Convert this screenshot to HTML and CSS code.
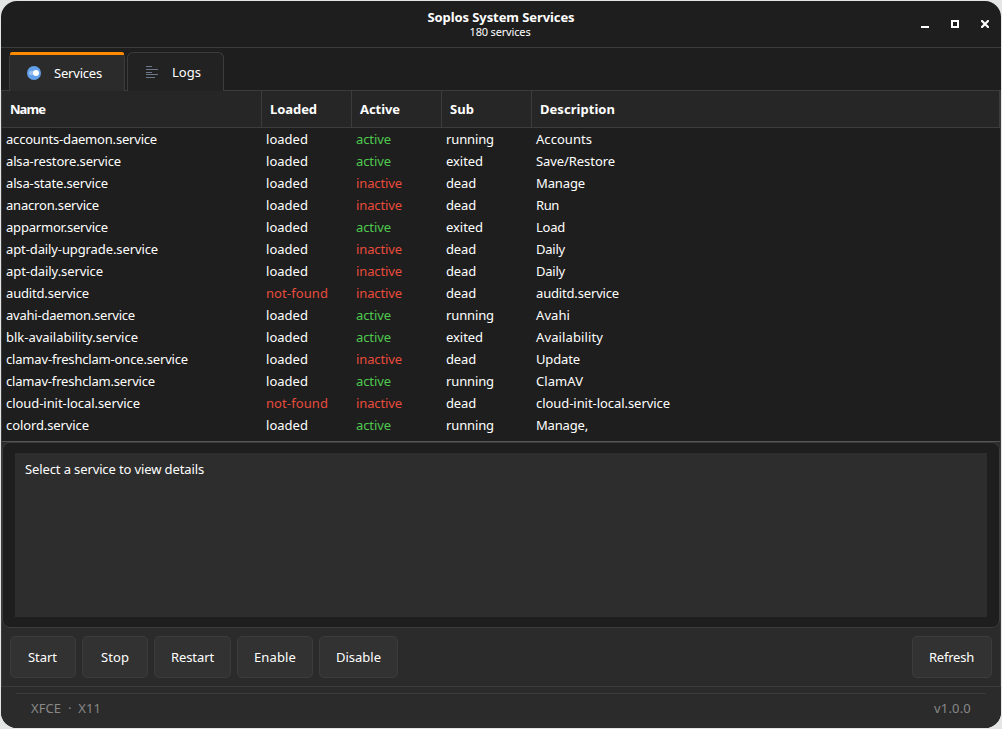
FILE: index.html
```html
<!DOCTYPE html>
<html lang="en">
<head>
    <meta charset="UTF-8">
    <meta name="viewport" content="width=device-width, initial-scale=1.0">
    <title>Soplos System Services</title>
    <link rel="stylesheet" href="styles.css">
</head>
<body>

    <div class="window">
        <header class="titlebar">
            <div class="titles">
                <h1><span class="fit" data-width="147">Soplos System Services</span></h1>
                <p><span class="fit" data-width="61">180 services</span></p>
            </div>
            <div class="controls">
                <svg width="8" height="8"><path d="M0 6h8v2H0z" fill="#fff"/></svg>
                <svg width="8" height="8"><path d="M1 1h6v6H1z" fill="none" stroke="#fff" stroke-width="2"/></svg>
                <svg width="8" height="8"><path d="M1 1l6 6M7 1L1 7" stroke="#fff" stroke-width="2.2" stroke-linecap="square"/></svg>
            </div>
        </header>

        <nav class="tabs">
            <div class="tab tab-active">
                <svg width="14" height="14"><circle cx="7" cy="7" r="7" fill="#62a0ea"/><rect x="2" y="5" width="9" height="4" rx="2" fill="#99c1f1"/><circle cx="9" cy="7" r="3" fill="#fff"/></svg>
                <span class="fit" data-width="48">Services</span>
            </div>
            <div class="tab">
                <svg width="14" height="14"><path d="M1 1.5h6M1 4.5h12M1 7.5h6M1 9.5h12M1 12.5h9" stroke="#6b7889"/></svg>
                <span class="fit" data-width="29">Logs</span>
            </div>
        </nav>

        <main class="page">
            <div class="list">
                <div class="row head">
                    <span>Name</span><span>Loaded</span><span>Active</span><span>Sub</span><span>Description</span>
                </div>
                <div id="rows"></div>
            </div>

            <div class="details">
                <div class="details-text"><span class="fit" data-width="179">Select a service to view details</span></div>
            </div>

            <div class="actions">
                <button class="w66 start"><span class="fit" data-width="29">Start</span></button>
                <button class="w66"><span class="fit" data-width="28">Stop</span></button>
                <button class="w77"><span class="fit" data-width="43">Restart</span></button>
                <button class="w76"><span class="fit" data-width="42">Enable</span></button>
                <button class="w79"><span class="fit" data-width="45">Disable</span></button>
                <button class="w80 refresh"><span class="fit" data-width="45">Refresh</span></button>
            </div>
        </main>

        <footer class="statusbar">
            <div class="status">
                <span class="fit" data-width="70">XFCE &nbsp;·&nbsp; X11</span>
                <span class="fit" data-width="37">v1.0.0</span>
            </div>
        </footer>
    </div>

    <script src="script.js"></script>
</body>
</html>
```
FILE: script.js
```js
// name, name width, loaded, active, sub, description, description width
const services = [
    ["accounts-daemon.service", 151, "loaded", "active", "running", "Accounts", 56],
    ["alsa-restore.service", 115, "loaded", "active", "exited", "Save/Restore", 79],
    ["alsa-state.service", 102, "loaded", "inactive", "dead", "Manage", 49],
    ["anacron.service", 93, "loaded", "inactive", "dead", "Run", 23],
    ["apparmor.service", 102, "loaded", "active", "exited", "Load", 29],
    ["apt-daily-upgrade.service", 152, "loaded", "inactive", "dead", "Daily", 29],
    ["apt-daily.service", 97, "loaded", "inactive", "dead", "Daily", 29],
    ["auditd.service", 83, "not-found", "inactive", "dead", "auditd.service", 83],
    ["avahi-daemon.service", 129, "loaded", "active", "running", "Avahi", 34],
    ["blk-availability.service", 132, "loaded", "active", "exited", "Availability", 67],
    ["clamav-freshclam-once.service", 182, "loaded", "inactive", "dead", "Update", 44],
    ["clamav-freshclam.service", 149, "loaded", "active", "running", "ClamAV", 47],
    ["cloud-init-local.service", 134, "not-found", "inactive", "dead", "cloud-init-local.service", 134],
    ["colord.service", 83, "loaded", "active", "running", "Manage,", 52]
];

const widths = {
    "loaded": 42, "not-found": 62, "active": 35, "inactive": 46,
    "running": 48, "exited": 37, "dead": 30,
    "Name": 35, "Loaded": 47, "Active": 40, "Sub": 24, "Description": 75
};

function addCell(row, text, width, state) {
    const cell = document.createElement("span");
    const label = document.createElement("span");
    label.className = "fit" + (state ? " " + state : "");
    label.dataset.width = width;
    label.textContent = text;
    cell.appendChild(label);
    row.appendChild(cell);
}

const rows = document.getElementById("rows");
services.forEach(([name, nameWidth, loaded, active, sub, desc, descWidth]) => {
    const row = document.createElement("div");
    row.className = "row";
    addCell(row, name, nameWidth);
    addCell(row, loaded, widths[loaded], loaded === "not-found" ? "bad" : "");
    addCell(row, active, widths[active], active === "active" ? "good" : "bad");
    addCell(row, sub, widths[sub]);
    addCell(row, desc, descWidth);
    rows.appendChild(row);
});

document.querySelectorAll(".head > span").forEach((cell) => {
    const text = cell.textContent;
    cell.innerHTML = '<span class="fit" data-width="' + widths[text] + '">' + text + '</span>';
});

document.querySelectorAll(".fit").forEach((el) => {
    const extra = Number(el.dataset.width) - el.getBoundingClientRect().width;
    const gap = extra / el.textContent.length;
    el.style.letterSpacing = gap.toFixed(3) + "px";
});
```
FILE: styles.css
```css
* { box-sizing: border-box; }
body { margin: 0; padding: 1px; height: 729px; overflow: hidden; background: #e4e6e6; color: #fff; font: 13px/22px "Noto Sans", "Open Sans", sans-serif; }
h1, p { margin: 0; }
svg { display: block; flex: none; }
.fit { white-space: nowrap; }
.window { width: 1000px; height: 727px; display: flex; flex-direction: column; overflow: hidden; background: #1e1e1e; border-radius: 16px; }

.titlebar { height: 47px; flex: none; display: grid; grid-template-columns: 1fr auto 1fr; border-bottom: 1px solid #3c3c3c; }
.titles { grid-column: 2; padding-top: 8px; text-align: center; }
.titles h1 { font-size: 13px; line-height: 17px; }
.titles p { padding-right: 2px; font-size: 11px; line-height: 12px; }
.controls { display: flex; justify-content: flex-end; gap: 22px; padding: 19px 12px 0 0; }

.tabs { height: 43px; flex: none; display: flex; align-items: flex-end; gap: 2px; padding-left: 8px; border-bottom: 1px solid #3c3c3c; }
.tab { width: 97px; height: 39px; margin-bottom: -1px; padding-left: 17px; display: flex; align-items: center; gap: 13px; background: #222; border: 1px solid #3c3c3c; border-bottom: 0; border-radius: 6px 6px 0 0; }
.tab-active { width: 116px; padding-top: 1px; background: #2b2b2b; position: relative; }
.tab-active::before { content: ""; position: absolute; top: -1px; left: 0; right: 0; height: 3px; background: #ff8c00; border-radius: 2px 2px 0 0; }

.page { height: 596px; flex: none; display: flex; flex-direction: column; background: #2b2b2b; border: 1px solid #3c3c3c; border-top: 0; }
.list { height: 351px; flex: none; background: #1e1e1e; border-bottom: 1px solid #555; }
.row { height: 22px; display: grid; grid-template-columns: 260px 90px 90px 90px 1fr; }
.row > span { padding-left: 4px; }
.head { height: 37px; background: #262626; border-bottom: 1px solid #3c3c3c; font-weight: bold; line-height: 36px; }
.head > span { padding-left: 8px; border-right: 1px solid #3c3c3c; }
.good { color: #4ec94e; }
.bad { color: #e74c3c; }

.details { height: 186px; flex: none; padding: 10px 12px; background: #1e1e1e; border: 1px solid #3c3c3c; border-radius: 8px; }
.details-text { height: 164px; padding: 5px 10px; background: #2d2d2d; }

.actions { display: flex; gap: 6px; padding: 8px 8px 0 8px; }
button { height: 42px; padding: 0; color: #fff; background: #323232; border: 1px solid #3c3c3c; border-radius: 5px; font: inherit; }
.w66 { width: 66px; }
.w76 { width: 76px; }
.w77 { width: 77px; }
.w79 { width: 79px; }
.w80 { width: 80px; }
.start, .refresh { padding-right: 1px; }
.refresh { margin-left: auto; }

.statusbar { flex: 1; padding: 6px 15px 0; background: #2b2b2b; color: #888; }
.status { display: flex; justify-content: space-between; padding: 3px 15px 0; border-top: 1px solid #3c3c3c; }
```
